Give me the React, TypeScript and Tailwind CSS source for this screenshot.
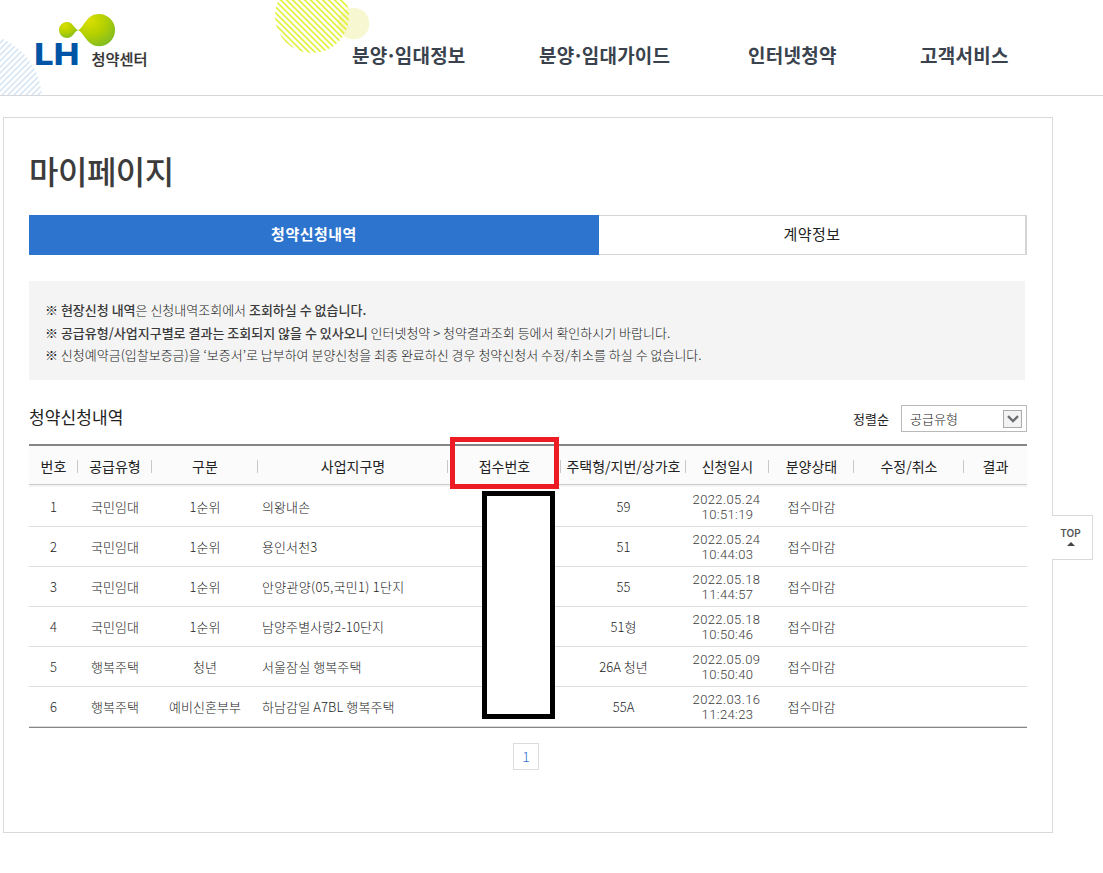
import React from "react";

const columns = [
  { label: "번호", width: "w-[49px]" },
  { label: "공급유형", width: "w-[74px]" },
  { label: "구분", width: "w-[106px]" },
  { label: "사업지구명", width: "w-[190px]" },
  { label: "접수번호", width: "w-[113px]" },
  { label: "주택형/지번/상가호", width: "w-[125px]" },
  { label: "신청일시", width: "w-[83px]" },
  { label: "분양상태", width: "w-[85px]" },
  { label: "수정/취소", width: "w-[110px]" },
  { label: "결과", width: "w-[63px]" },
];

const rows = [
  ["국민임대", "1순위", "의왕내손", "59", "2022.05.24", "10:51:19"],
  ["국민임대", "1순위", "용인서천3", "51", "2022.05.24", "10:44:03"],
  ["국민임대", "1순위", "안양관양(05,국민1) 1단지", "55", "2022.05.18", "11:44:57"],
  ["국민임대", "1순위", "남양주별사랑2-10단지", "51형", "2022.05.18", "10:50:46"],
  ["행복주택", "청년", "서울잠실 행복주택", "26A 청년", "2022.05.09", "10:50:40"],
  ["행복주택", "예비신혼부부", "하남감일 A7BL 행복주택", "55A", "2022.03.16", "11:24:23"],
];

function Decorations() {
  return (
    <svg className="pointer-events-none absolute left-0 top-0" width="400" height="95" viewBox="0 0 400 95">
      <defs>
        <pattern id="limeLines" width="4.24" height="4.24" patternUnits="userSpaceOnUse" patternTransform="rotate(45)">
          <rect width="4.24" height="1.5" fill="#e0f02c" />
        </pattern>
        <pattern id="blueLines" width="4.24" height="4.24" patternUnits="userSpaceOnUse" patternTransform="rotate(-45)">
          <rect width="4.24" height="1.4" fill="#cfe1f3" />
        </pattern>
      </defs>
      <circle cx="353.5" cy="23.5" r="15.8" fill="#f7f8d2" />
      <circle cx="312" cy="16" r="37" fill="url(#limeLines)" />
      <circle cx="-25" cy="100" r="67" fill="url(#blueLines)" />
    </svg>
  );
}

function Logo() {
  return (
    <svg className="absolute left-[30px] top-[8px]" width="124" height="64" viewBox="30 8 124 64">
      <defs>
        <radialGradient id="bigDrop" cx="0.3" cy="0.22" r="0.85">
          <stop offset="0" stopColor="#dadf00" />
          <stop offset="0.5" stopColor="#b5d000" />
          <stop offset="1" stopColor="#82bc22" />
        </radialGradient>
      </defs>
      <path
        d="M78 30.200C84 28 86 14 99 14A16 16 0 0 1 99 46.200C87 46.200 84 32.500 78 30.200Z"
        fill="url(#bigDrop)"
      />
      <path
        d="M78 30.200C74 28.500 73 22 67 22A8 8 0 0 0 67 38C73 38 74 31.500 78 30.200Z"
        fill="url(#bigDrop)"
      />
      <text x="34.300" y="65.200" fontSize="30.500" fontWeight="800" fontFamily="Inter, sans-serif" textLength="45" lengthAdjust="spacingAndGlyphs" fill="#0054a6">
        LH
      </text>
      <text x="91.500" y="65" fontSize="15" fontWeight="500" fontFamily="'Noto Sans CJK KR', sans-serif" textLength="56" lengthAdjust="spacingAndGlyphs" fill="#333" stroke="#333" strokeWidth="0.2">
        청약센터
      </text>
    </svg>
  );
}

export default function App() {
  return (
    <div className="h-[873px] w-[1103px] overflow-hidden bg-white font-['Noto_Sans_CJK_KR',sans-serif] text-[13px] font-light text-[#222]">
      <header className="relative h-24 border-b border-[#d5d7d8]">
        <Decorations />
        <Logo />
        <nav className="relative flex h-full items-start pl-[352px] pt-[41px] text-[19px] leading-7 font-bold text-[#3a434d]">
          <a className="w-[187px] whitespace-nowrap tracking-[0.2px]">분양<span className="-mx-[2px]">·</span>임대정보</a>
          <a className="w-[209px] whitespace-nowrap tracking-[0.2px]">분양<span className="-mx-[2px]">·</span>임대가이드</a>
          <a className="w-[172px] whitespace-nowrap tracking-[0.3px]">인터넷청약</a>
          <a className="whitespace-nowrap tracking-[0.3px]">고객서비스</a>
        </nav>
      </header>

      <main className="relative ml-[3px] mt-[21px] h-[716px] w-[1050px] border border-[#d9d9d9] pl-[25px]">
        <h1 className="mt-[28px] h-12 text-[32px] leading-[48px] font-medium tracking-[-0.5px] text-[#3c3c3c]">마이페이지</h1>

        <div className="mt-[21px] flex h-10 w-[998px] text-center text-[15px] leading-[38px] tracking-[0.5px]">
          <div className="w-[570px] bg-[#2d74ce] font-bold text-white">청약신청내역</div>
          <div className="w-[428px] border border-l-0 border-[#d4d4d4] border-r-2 leading-[36px] font-normal">계약정보</div>
        </div>

        <div className="mt-[26px] h-[99px] w-[996px] bg-[#f4f4f4] pl-4 pt-[18px] leading-[22.5px] whitespace-nowrap">
          <p>※ <b className="font-medium text-[#3a3a3a]">현장신청 내역</b>은 신청내역조회에서 <b className="font-medium text-[#3a3a3a]">조회하실 수 없습니다.</b></p>
          <p>※ <b className="font-medium text-[#3a3a3a]">공급유형/사업지구별로 결과는 조회되지 않을 수 있사오니</b> 인터넷청약 &gt; 청약결과조회 등에서 확인하시기 바랍니다.</p>
          <p>※ 신청예약금(입찰보증금)을 ‘보증서’로 납부하여 분양신청을 최종 완료하신 경우 청약신청서 수정/취소를 하실 수 없습니다.</p>
        </div>

        <div className="flex h-16 w-[998px] items-start justify-between pt-[25px]">
          <h2 className="text-[17px] leading-6 font-normal tracking-[0.1px]">청약신청내역</h2>
          <div className="flex items-center gap-3">
            <span className="font-normal">정렬순</span>
            <div className="flex h-[27px] w-[126px] items-center justify-between border border-[#b9b9b9] pl-2 pr-1">
              <span>공급유형</span>
              <span className="flex h-[18px] w-[19px] items-center justify-center border border-[#aaa] bg-[#f3f3f3]">
                <svg width="12" height="8" viewBox="0 0 12 8" fill="none" stroke="#6b6e72" strokeWidth="2.400">
                  <path d="M1 1.200L6 6L11 1.200" />
                </svg>
              </span>
            </div>
          </div>
        </div>

        <div className="relative w-[998px]">
          <table className="w-[998px] table-fixed border-separate border-spacing-0 text-center">
            <thead>
              <tr className="h-[43px]">
                {columns.map((c, i) => (
                  <th key={c.label} className={`${c.width} border-t-2 border-b-2 border-t-[#858585] border-b-[#f4f4f4] bg-[#fbfbfb] p-0 text-[14px] leading-5 font-normal`}>
                    <div className="flex h-[39px] items-center border-b border-[#c9c9c9] pt-[2px]">
                      <span className="-mt-px flex-1 whitespace-nowrap">{c.label}</span>
                      {i < columns.length - 1 && <i className="-ml-px h-[13px] w-px bg-[#c8c8c8]" />}
                    </div>
                  </th>
                ))}
              </tr>
            </thead>
            <tbody className="[&_td]:h-10 [&_td]:border-b [&_td]:border-[#dcdcdc] [&_td]:p-0 [&_td]:leading-[15px] [&_td]:whitespace-nowrap">
              {rows.map((r, i) => (
                <tr key={i}>
                  <td>{i + 1}</td>
                  <td>{r[0]}</td>
                  <td>{r[1]}</td>
                  <td className="text-left"><span className={r[2].includes("05,") ? "pl-1 tracking-[0.3px]" : "pl-1 tracking-[0.1px]"}>{r[2]}</span></td>
                  <td />
                  <td>{r[3]}</td>
                  <td className="font-[Roboto,sans-serif] text-[13px] tracking-[0.4px] text-[#3a3a3a]">
                    <div className="-ml-[2px] h-[15px]">{r[4]}</div>
                    <div className="h-[15px]">{r[5]}</div>
                  </td>
                  <td>접수마감</td>
                  <td />
                  <td />
                </tr>
              ))}
            </tbody>
          </table>
          <div className="h-px bg-[#858585]" />
          <div className="absolute left-[421px] top-[-7px] h-[52px] w-[109px] border-5 border-[#ed1c24]" />
          <div className="absolute left-[453px] top-[47px] h-[228px] w-[73px] border-5 border-black bg-white" />
        </div>

        <div className="ml-[484px] mt-[15px] flex h-[27px] w-[26px] items-center justify-center border border-[#dcdcdc] text-[14px] text-[#2d74ce]">
          <span>1</span>
        </div>

        <button className="absolute right-[-41px] top-[397px] flex h-[45px] w-[41px] flex-col items-center border border-l-0 border-[#d9d9d9] bg-white pr-[3px] pt-[12px]">
          <span className="font-['Inter',sans-serif] text-[10px] leading-[10px] font-semibold text-[#555]">TOP</span>
          <svg className="mt-[4px]" width="8" height="4" viewBox="0 0 8 4"><path d="M0 4L4 0L8 4Z" fill="#444" /></svg>
        </button>
      </main>
    </div>
  );
}
